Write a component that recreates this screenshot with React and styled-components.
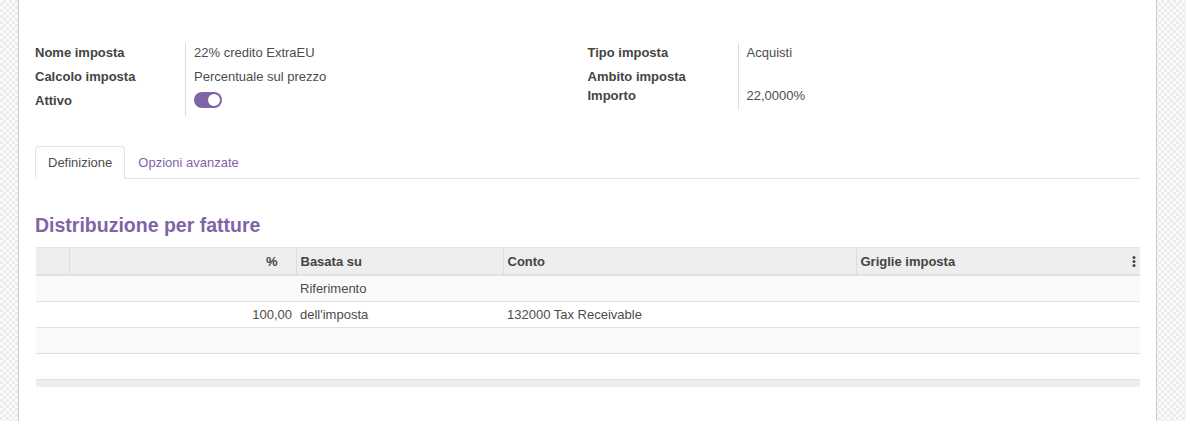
import styled, {createGlobalStyle} from 'styled-components';

const PURPLE = '#7f64a8';
const TEXT = '#4c4c4c';

/* ---------- global ---------- */
const Global = createGlobalStyle`
  html, body { margin:0; padding:0; }
  body {
    font-family:"Liberation Sans", Arial, sans-serif;
    font-size:13px; color:${TEXT};
    background:repeating-conic-gradient(#ebebeb 0% 25%, #fbfbfb 0% 50%) 0 0/6px 6px;
    min-height:421px;
  }
`;

/* ---------- styled ---------- */
const Sheet = styled.div`
  box-sizing:border-box;
  margin-left:18px;width:1139px;min-height:421px;
  background:#fff;
  border-left:1px solid #c9c9d6;border-right:1px solid #c9c9d6;
  padding:43px 16px 0;
`;
const Groups = styled.div`display:flex;`;
const Group  = styled.div`
  flex:1;display:grid;grid-template-columns:150px 1fr;align-content:start;
`;
const Label = styled.div`
  font-weight:bold;line-height:20px;height:${p => p.$h || 24}px;color:#444;
`;
const Value = styled.div`
  border-left:1px solid #dcdcdc;padding-left:8px;
  line-height:20px;height:${p => p.$h || 24}px;
`;
const Toggle = styled.span`
  display:inline-flex;align-items:center;justify-content:flex-end;
  box-sizing:border-box;width:28px;height:16px;border-radius:8px;
  margin-top:1px;padding:2px;background:${PURPLE};
  &::after{content:'';width:12px;height:12px;border-radius:50%;background:#fff;}
`;

const Tabs = styled.div`
  display:flex;margin-top:30px;border-bottom:1px solid #dee2e6;
`;
const Tab = styled.div`
  padding:8px 12px 7px;line-height:16px;margin-bottom:-1px;
  border:1px solid ${p => p.$active ? '#dee2e6' : 'transparent'};
  border-bottom-color:${p => p.$active ? '#fff' : 'transparent'};
  border-radius:4px 4px 0 0;background:${p => p.$active ? '#fff' : 'transparent'};
  color:${p => p.$active ? TEXT : PURPLE};
`;

const Heading = styled.h2`
  margin:34px 0 10px;font-size:19.5px;line-height:24px;font-weight:bold;color:${PURPLE};
`;

const Table = styled.table`
  width:1104px;margin-left:1px;table-layout:fixed;border-collapse:collapse;
`;
const Th = styled.th`
  height:26px;padding:0 ${p => p.$pr || 4}px 0 4px;background:#eee;
  border-top:1px solid #e3e3e3;border-bottom:2px solid #dee2e6;
  border-left:${p => p.$first ? 'none' : '1px solid #dcdcdc'};
  text-align:${p => p.$right ? 'right' : 'left'};font-weight:bold;color:#444;
  white-space:nowrap;
`;
const HeadInner = styled.div`display:flex;align-items:center;justify-content:space-between;`;
const Row = styled.tr`
  background:${p => p.$odd ? '#fafafa' : '#fff'};
`;
const Td = styled.td`
  height:25px;padding:0 4px;border-bottom:1px solid #dee2e6;
  text-align:${p => p.$right ? 'right' : 'left'};white-space:nowrap;
`;
const FootCell = styled.td`height:7px;padding:0;background:#eee;`;

const Kebab = () => (
  <svg width="4" height="11" viewBox="0 0 4 11">
    <circle cx="2" cy="1.5" r="1.5" fill="#444"/>
    <circle cx="2" cy="5.5" r="1.5" fill="#444"/>
    <circle cx="2" cy="9.5" r="1.5" fill="#444"/>
  </svg>
);

/* ---------- component ---------- */
const rows = [
  {pct: '', base: 'Riferimento', conto: ''},
  {pct: '100,00', base: "dell'imposta", conto: '132000 Tax Receivable'},
  {pct: '', base: '', conto: ''},
  {pct: '', base: '', conto: ''},
];

export default function App() {
  return (
    <>
      <Global/>
      <Sheet>
        <Groups>
          <Group>
            <Label>Nome imposta</Label><Value>22% credito ExtraEU</Value>
            <Label>Calcolo imposta</Label><Value>Percentuale sul prezzo</Value>
            <Label $h={25}>Attivo</Label><Value $h={25}><Toggle/></Value>
          </Group>
          <Group>
            <Label>Tipo imposta</Label><Value>Acquisti</Value>
            <Label $h={19}>Ambito imposta</Label><Value $h={19}/>
            <Label>Importo</Label><Value>22,0000%</Value>
          </Group>
        </Groups>

        <Tabs>
          <Tab $active>Definizione</Tab>
          <Tab>Opzioni avanzate</Tab>
        </Tabs>

        <Heading>Distribuzione per fatture</Heading>

        <Table>
          <colgroup>
            <col style={{width: 33}}/><col style={{width: 227}}/><col style={{width: 207}}/>
            <col style={{width: 353}}/><col style={{width: 284}}/>
          </colgroup>
          <thead>
            <tr>
              <Th $first/>
              <Th $right $pr={18}>%</Th>
              <Th>Basata su</Th>
              <Th>Conto</Th>
              <Th><HeadInner>Griglie imposta<Kebab/></HeadInner></Th>
            </tr>
          </thead>
          <tbody>
            {rows.map((r, i) => (
              <Row key={i} $odd={i % 2 === 0}>
                <Td/>
                <Td $right>{r.pct}</Td>
                <Td>{r.base}</Td>
                <Td>{r.conto}</Td>
                <Td/>
              </Row>
            ))}
          </tbody>
          <tfoot>
            <tr><FootCell colSpan={5}/></tr>
          </tfoot>
        </Table>
      </Sheet>
    </>
  );
}
